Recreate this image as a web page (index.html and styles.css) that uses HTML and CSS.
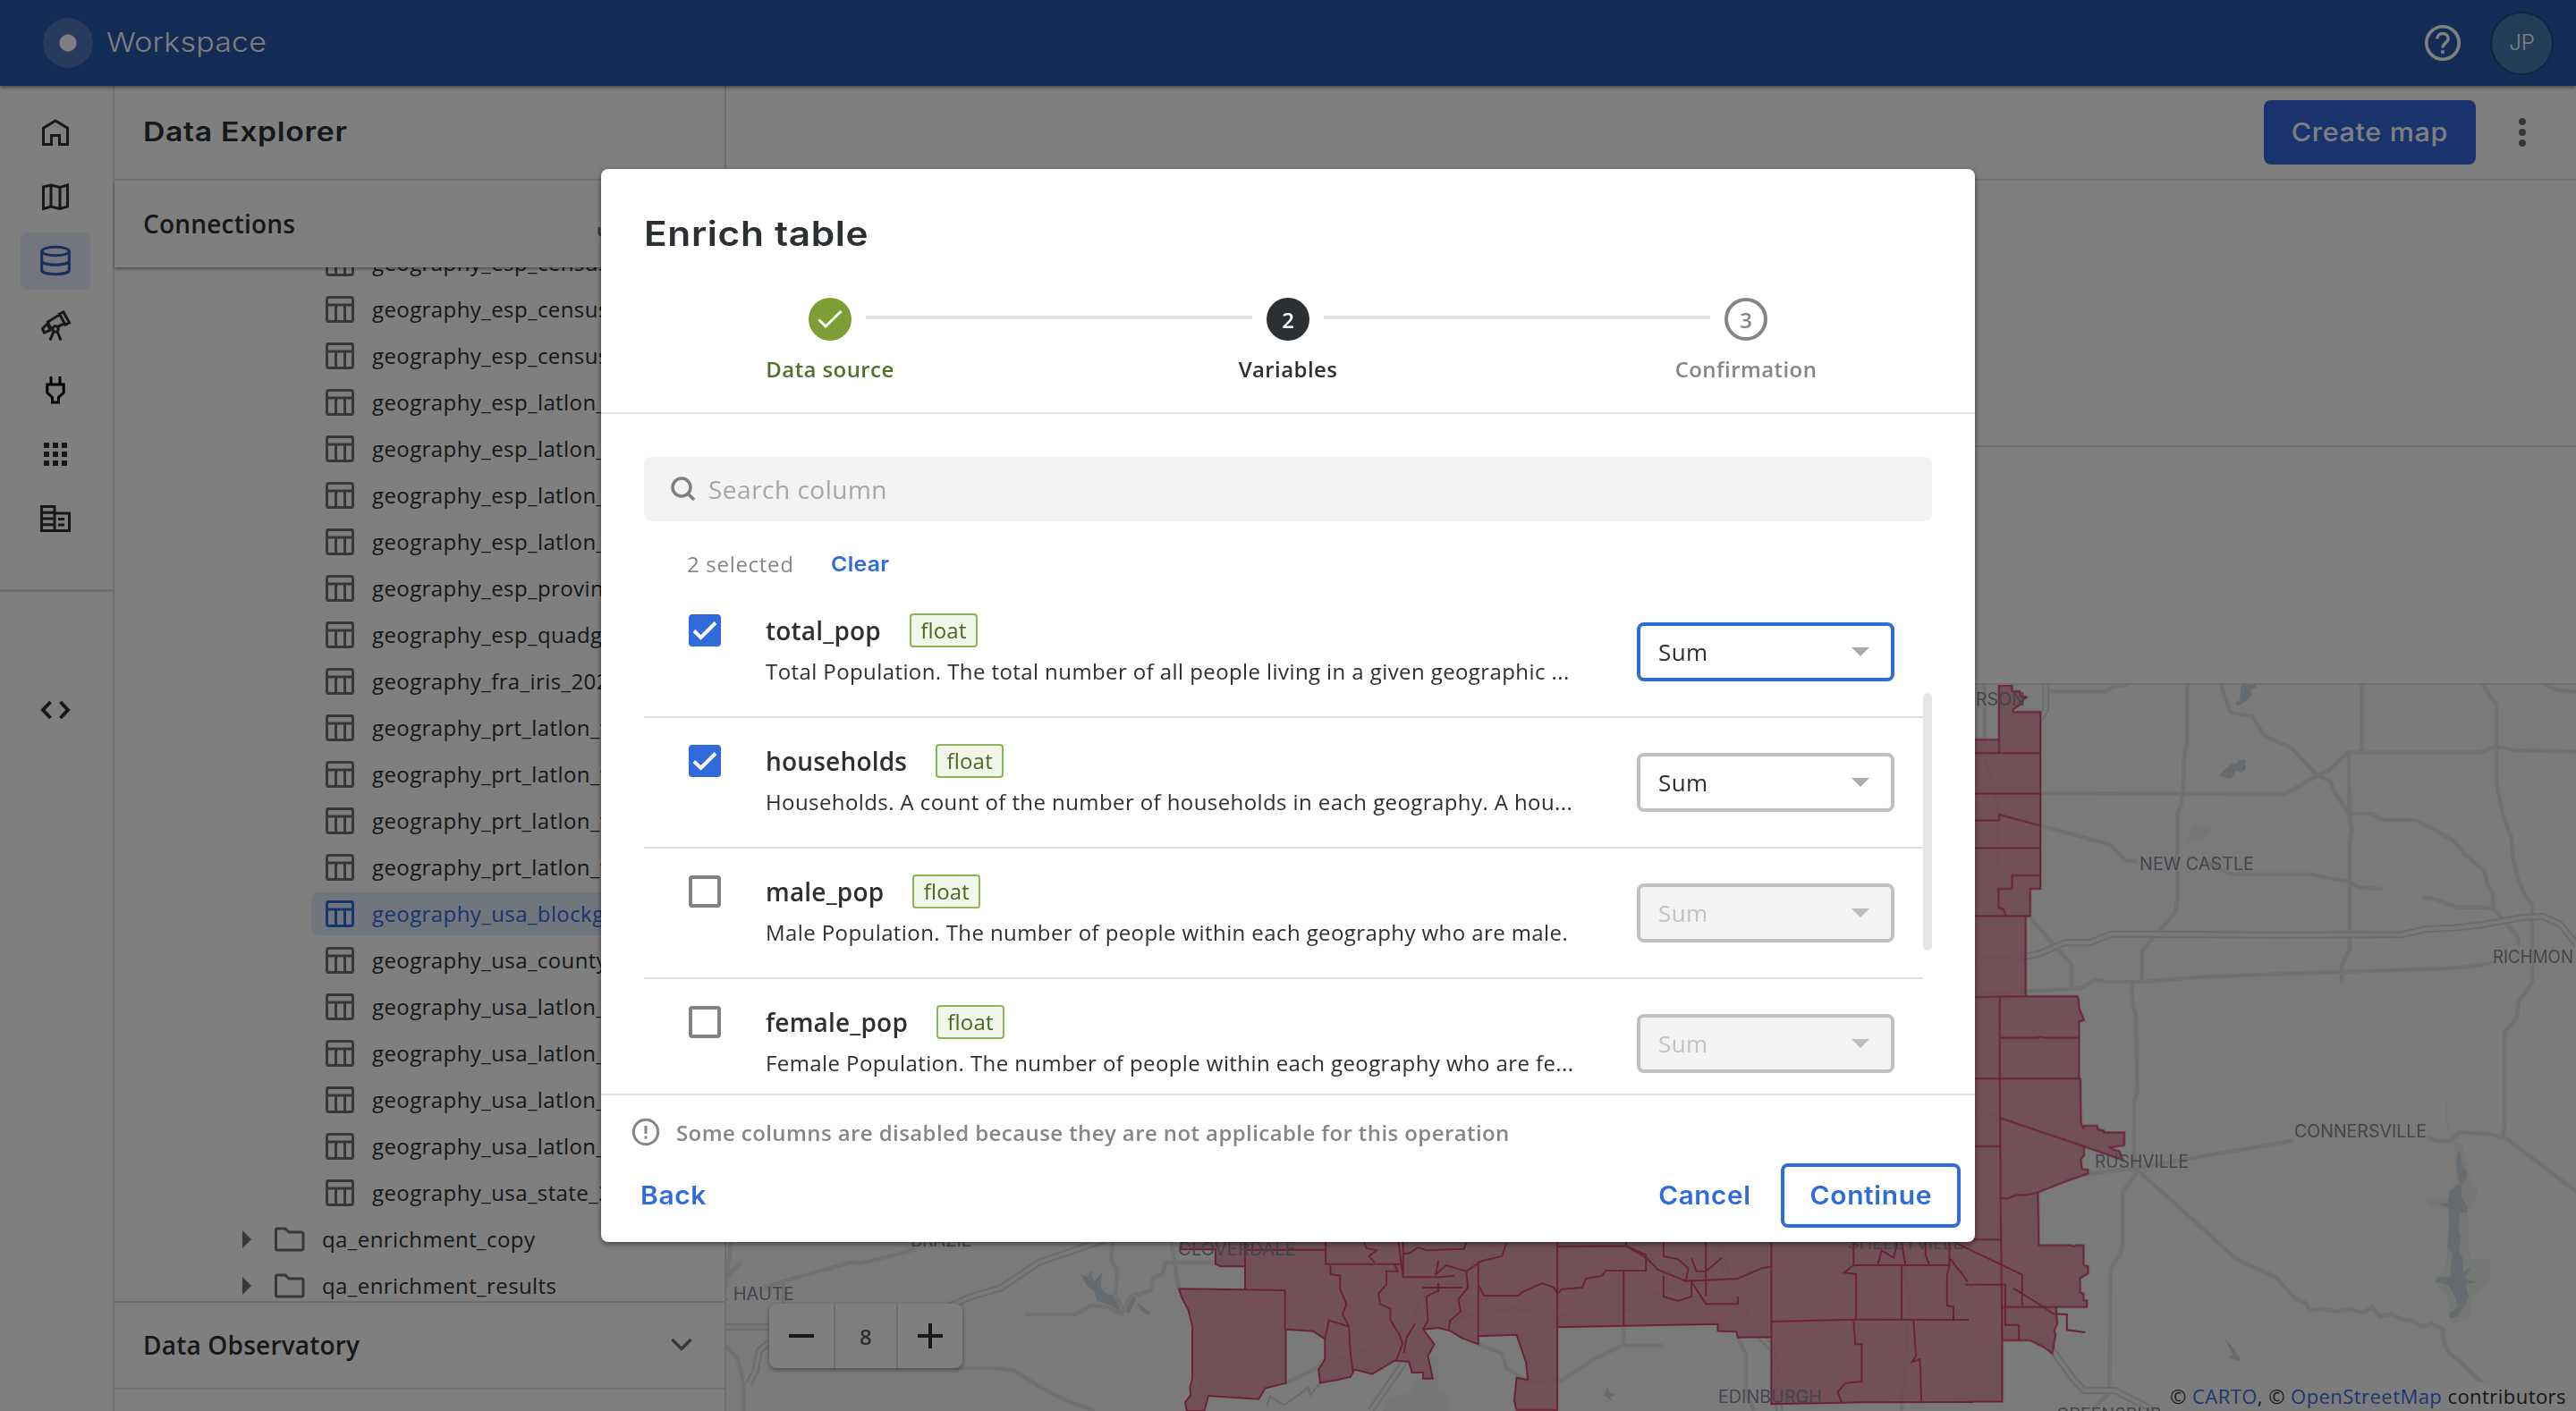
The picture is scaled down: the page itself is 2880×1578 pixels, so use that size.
FILE: index.html
```html
<!DOCTYPE html>
<html lang="en">
<head>
<meta charset="utf-8">
<title>Workspace - Data Explorer</title>
<link rel="stylesheet" href="styles.css">
</head>
<body>
<svg class="defs" width="0" height="0" aria-hidden="true">
  <symbol id="i-table" viewBox="0 0 32 30"><path d="M4 1.5H28Q30.5 1.5 30.5 4V26Q30.5 28.5 28 28.5H4Q1.5 28.5 1.5 26V4Q1.5 1.5 4 1.5ZM2 10H30M11.5 10V28M21.5 10V28" fill="none" stroke="currentColor" stroke-width="3"/></symbol>
  <symbol id="i-folder" viewBox="0 0 36 30"><path d="M4 3H13L17 7H31Q33 7 33 9V25Q33 27 31 27H4Q2.5 27 2.5 25V5Q2.5 3 4 3Z" fill="none" stroke="currentColor" stroke-width="3"/></symbol>
  <symbol id="i-caret" viewBox="0 0 10 20"><path d="M0 0L10 10L0 20Z" fill="currentColor"/></symbol>
  <symbol id="i-drop" viewBox="0 0 20 10"><path d="M0 0H20L10 10Z" fill="currentColor"/></symbol>
  <symbol id="i-check" viewBox="0 0 28 22"><path d="M2 11.5L9.5 19L26 2.5" fill="none" stroke="currentColor" stroke-width="4"/></symbol>
</svg>

<div class="app">
  <header class="topbar">
    <span class="logo"></span>
    <span class="brand">Workspace</span>
    <svg class="help" viewBox="0 0 44 44"><circle cx="22" cy="22" r="18.2" fill="none" stroke="currentColor" stroke-width="3.6"/><path d="M15.8 17.5C15.8 9.500 28.200 9.500 28.200 17.500C28.200 21.500 22 22.300 22 27.500" fill="none" stroke="currentColor" stroke-width="3.600"/><path d="M20.200 30.200H23.800V33.800H20.200Z" fill="currentColor"/></svg>
    <span class="avatar">JP</span>
  </header>

  <div class="body">
    <nav class="rail">
      <div class="rail-top">
        <span class="rail-item"><svg viewBox="0 0 36 36"><path d="M4.500 31.500V13.200L18 5L31.500 13.200V31.500H22.500V21.500H13.500V31.500Z"/></svg></span>
        <span class="rail-item"><svg viewBox="0 0 36 36"><path d="M4.500 7L13 5L23 7.500L31.500 5V29L23 31.500L13 29L4.500 31.500ZM13 5V29M23 7.500V31.500"/></svg></span>
        <span class="rail-item active"><svg viewBox="0 0 36 36"><ellipse cx="18" cy="7" rx="15.300" ry="4.800"/><path d="M2.700 7V28C2.700 34.200 33.300 34.200 33.300 28V7M2.700 17.500C2.700 23.800 33.300 23.800 33.300 17.500"/></svg></span>
        <span class="rail-item"><svg viewBox="0 0 36 36"><path d="M22.500 5L27 3L33.500 14.800L29 17.200ZM22.500 6L9.500 14L12.500 21L15 20.500M21 19L28 16M9 16L3.500 21.500L5.500 26L12 23.300L9.500 17Z"/><circle cx="18" cy="22" r="3.200"/><path d="M15.800 25L12 34.500M20.200 25L24 34.500"/></svg></span>
        <span class="rail-item plug"><svg viewBox="0 0 36 36"><path d="M13 3V12M23 3V12M8.800 12H27.200V21L21.500 26.500V32H14.500V26.500L8.800 21Z"/></svg></span>
        <span class="rail-item"><svg class="solid" viewBox="0 0 36 36"><path d="M5 5h6v6h-6zM15 5h6v6h-6zM25 5h6v6h-6zM5 15h6v6h-6zM15 15h6v6h-6zM25 15h6v6h-6zM5 25h6v6h-6zM15 25h6v6h-6zM25 25h6v6h-6z"/></svg></span>
        <span class="rail-item"><svg viewBox="0 0 36 36"><path d="M2.500 4.500H17V31.500H2.500ZM17 12H33.500V31.500H17M2.500 11.300H17M2.500 18H17M2.500 24.800H17M21 18.500H28M21 25H28"/></svg></span>
      </div>
      <span class="rail-item code"><svg viewBox="0 0 36 36"><path d="M12.500 9L4 18L12.500 27M23.500 9L32 18L23.500 27"/></svg></span>
    </nav>

    <aside class="sidebar">
      <h1 class="side-title"><span>Data Explorer</span></h1>
      <div class="side-section"><span>Connections</span><svg class="import" viewBox="0 0 36 36"><path d="M4 22V28Q4 31 7 31H29Q32 31 32 28V22M18 4V22M10 14L18 22L26 14"/></svg></div>
      <ul class="tree">
        <li class="leaf"><svg><use href="#i-table"/></svg><span>geography_esp_census_2011</span></li>
        <li class="leaf"><svg><use href="#i-table"/></svg><span>geography_esp_census_2019</span></li>
        <li class="leaf"><svg><use href="#i-table"/></svg><span>geography_esp_census_2020</span></li>
        <li class="leaf"><svg><use href="#i-table"/></svg><span>geography_esp_latlon_v1</span></li>
        <li class="leaf"><svg><use href="#i-table"/></svg><span>geography_esp_latlon_v2</span></li>
        <li class="leaf"><svg><use href="#i-table"/></svg><span>geography_esp_latlon_v3</span></li>
        <li class="leaf"><svg><use href="#i-table"/></svg><span>geography_esp_latlon_v4</span></li>
        <li class="leaf"><svg><use href="#i-table"/></svg><span>geography_esp_province</span></li>
        <li class="leaf"><svg><use href="#i-table"/></svg><span>geography_esp_quadgrid</span></li>
        <li class="leaf"><svg><use href="#i-table"/></svg><span>geography_fra_iris_2020</span></li>
        <li class="leaf"><svg><use href="#i-table"/></svg><span>geography_prt_latlon_v1</span></li>
        <li class="leaf"><svg><use href="#i-table"/></svg><span>geography_prt_latlon_v2</span></li>
        <li class="leaf"><svg><use href="#i-table"/></svg><span>geography_prt_latlon_v3</span></li>
        <li class="leaf"><svg><use href="#i-table"/></svg><span>geography_prt_latlon_v4</span></li>
        <li class="leaf selected"><svg><use href="#i-table"/></svg><span>geography_usa_blockgroup</span></li>
        <li class="leaf"><svg><use href="#i-table"/></svg><span>geography_usa_county</span></li>
        <li class="leaf"><svg><use href="#i-table"/></svg><span>geography_usa_latlon_v1</span></li>
        <li class="leaf"><svg><use href="#i-table"/></svg><span>geography_usa_latlon_v2</span></li>
        <li class="leaf"><svg><use href="#i-table"/></svg><span>geography_usa_latlon_v3</span></li>
        <li class="leaf"><svg><use href="#i-table"/></svg><span>geography_usa_latlon_v4</span></li>
        <li class="leaf"><svg><use href="#i-table"/></svg><span>geography_usa_state_2019</span></li>
        <li class="folder"><svg class="caret"><use href="#i-caret"/></svg><svg class="dir"><use href="#i-folder"/></svg><span>qa_enrichment_copy</span></li>
        <li class="folder"><svg class="caret"><use href="#i-caret"/></svg><svg class="dir"><use href="#i-folder"/></svg><span>qa_enrichment_results</span></li>
      </ul>
      <div class="side-section observatory"><span>Data Observatory</span><svg class="chevron" viewBox="0 0 24 16"><path d="M1.500 2L12 12.500L22.500 2"/></svg></div>
      <div class="side-end"></div>
    </aside>

    <main class="main">
      <div class="toolbar">
        <span class="create"><span>Create map</span></span>
        <span class="kebab"><i></i><i></i><i></i></span>
      </div>
      <div class="summary"></div>
      <div class="tabs"></div>
      <div class="map">
        <svg class="canvas" viewBox="812 766 2068 812">
          <!-- east of the modal -->
          <g transform="translate(2160 740) scale(.4592 .5345)">
            <g class="green"><path d="M615 382L634 344L672 344L680 356L660 374L634 370ZM1250 925L1256 925L1256 965L1270 1000L1290 1010L1310 1080L1330 1110L1322 1125L1304 1150L1310 1250L1350 1246L1362 1260L1358 1300L1315 1325L1310 1375L1262 1385L1255 1330L1222 1300L1250 1270L1262 1150L1206 1138L1206 1126L1255 1120L1276 1080L1272 1010L1252 975Z"/></g>
            <g class="water"><path d="M752 48H790V54L776 58L778 70L764 84L744 92L738 88L750 78ZM698 238L728 214L744 212L748 206L764 205V225L752 234L742 228L728 246ZM1282 1022L1290 1052L1303 1068L1300 1082L1290 1092L1288 1120L1303 1138V1150L1284 1154L1282 1190L1288 1205L1283 1230L1293 1250V1276L1312 1268L1298 1292L1330 1298L1298 1302L1307 1328L1300 1345L1280 1370L1260 1374L1262 1362L1280 1350L1274 1330L1258 1306L1226 1298L1228 1288L1262 1288L1262 1270L1268 1240L1254 1226L1260 1180L1258 1142L1235 1135L1256 1132L1262 1106L1284 1092L1276 1050ZM712 1416L738 1440L742 1450L750 1454L748 1464L722 1456L732 1450Z"/></g>
            <g class="road">
              <path d="M283 62H425L440 52L476 48M621 48V165L613 205V250L606 300L597 320V500L592 525L511 605V668M703 48L726 106L780 115L810 155L876 181L938 238L970 250L980 275L1016 318L1070 318L1098 331H1175L1220 350L1270 375L1300 405L1345 438L1352 465L1366 485V515L1428 578V596M264 275L860 277L935 240L965 228L1012 190H1335L1374 177L1415 185L1570 188M1046 48V190M1014 190L1016 318L1022 350L1017 378V600L998 635V672M1340 48L1374 90V255L1392 325L1411 370L1413 400C1425 470 1445 490 1461 508V672L1428 712L1424 745L1394 775V965L1390 995M1490 48L1520 58L1570 64M264 343L435 383L472 417H500M660 417L730 445H920L1015 460L1040 473L1098 475M1194 493L1222 496L1277 514H1345L1368 518M195 495L340 634V682M90 695L228 690L360 684L398 666L430 670H511L650 660L890 652L1240 642L1290 640L1370 630M486 670L488 715L496 738L500 900L492 920V1060L495 1075L464 1108V1215L458 1243L440 1260L434 1275L432 1530L395 1560M380 1072L492 1060L880 1002M1205 995L1230 1003H1260L1285 985L1355 988L1400 998L1570 1110M495 1060L600 1140L740 1250L838 1288L885 1334L908 1340L920 1358L950 1354L985 1360L1015 1354L1050 1362L1072 1350L1090 1370L1118 1365L1150 1378L1168 1378L1195 1392L1215 1384L1245 1397V1420L1258 1447L1280 1460L1340 1510M128 48V200L160 300V430M90 935L167 955M90 1150L167 1123"/>
            </g>
            <path class="hwy" d="M277 48V100L230 165L210 178L90 185M90 625H180L262 611L322 588H384L436 570H500L830 572L1145 571L1200 560L1270 557L1335 551L1440 535L1487 533L1530 550L1570 592M40 1260L170 1350L245 1385L345 1502L370 1525H445L560 1575"/>
            <path class="hwy-in" d="M277 48V100L230 165L210 178L90 185M90 625H180L262 611L322 588H384L436 570H500L830 572L1145 571L1200 560L1270 557L1335 551L1440 535L1487 533L1530 550L1570 592M40 1260L170 1350L245 1385L345 1502L370 1525H445L560 1575"/>
          </g>
          <!-- south of the modal -->
          <g transform="translate(800 1370) scale(.8929 .3333)">
            <path class="green" d="M835 624L840 580L872 560L876 510L890 520L895 440L905 440V560L918 570V624Z"/>
            <path class="water" d="M457 165L465 175L470 152L474 190L484 160L482 210L490 230L500 235L503 265L508 290L490 265L478 255L474 220L465 205ZM508 290L515 250L524 230L528 262L543 290V305L532 285L526 250L518 296ZM1105 565L1112 575L1117 542L1119 560L1128 570L1120 575L1122 590L1113 572Z"/>
            <path class="brook" d="M690 610L694 575L712 604L730 570L742 545L745 570L760 520L775 515"/>
            <path class="road" d="M20 50L12 210M32 125L12 180M60 210L90 185L170 125L183 128L225 100L250 82M85 190V264M0 255H12M388 300H450L470 270L490 275L508 300L520 240L545 220L548 175L560 165L563 126H705M498 50L495 115L503 150L500 240L514 290M570 50L580 215M0 370L28 450L35 530V624M300 480H350L375 490L410 550L440 590L475 624M0 548H12M714 530L760 470L840 400L870 330L885 240L940 150L980 50M955 400L985 430L990 480L1020 525L1060 520L1100 450L1135 405H1187M1137 405V345M880 330L960 300L1000 280L1050 300L1140 290L1180 230L1240 160M1280 380L1290 430V560L1300 624M1480 50L1495 250L1490 450L1485 624M597 480L617 573"/>
            <path class="hwy" d="M487 50L405 125L357 212L320 240L290 275M0 342H67M67 395L55 420L50 490L42 530M870 430L820 624M1255 50L1270 210L1300 350L1325 420L1332 624"/>
            <path class="hwy-in" d="M487 50L405 125L357 212L320 240L290 275M0 342H67M67 395L55 420L50 490L42 530M870 430L820 624M1255 50L1270 210L1300 350L1325 420L1332 624"/>
          </g>
          <g class="blocks">
            <path transform="translate(2160 740) scale(.4592 .5345)" d="M90 163H163V50H195V62H214L216 72L230 74L216 84L214 90L197 100V105H264V475H239V532H228V700H353L357 706L358 725L370 750L358 753V870L361 872L363 968L369 975L371 971H402L404 979L418 981V985H468V1012L434 1016L442 1021L456 1024L464 1042L370 1014V1033L362 1042L364 1053L365 1062L380 1063V1071L330 1086L258 1110L260 1221H340L345 1224L350 1221H369V1262L380 1265V1280L360 1290L361 1320L369 1322V1336H377V1350H302L305 1385L297 1400L301 1407L293 1447L270 1433L240 1420H171V1548H90Z"/>
            <path transform="translate(800 1370) scale(.8929 .3333)" d="M583 50V82H626V130L632 139H663V219L580 214L584 245L592 285L597 340V515L594 545L595 570L588 595L590 624H612L617 573L680 584L688 548L714 530V350L748 356L763 382V450L755 485L757 530L778 520L795 510L800 485L822 500L835 480L850 455L868 458L872 495H886V515H898L892 440L900 400L886 350L905 345L920 355L935 380L955 400V373L1003 368L1015 462L1017 520L1003 512L1000 590L1003 620H1054V343L1255 332V356L1278 358L1280 377L1322 376V601L1440 595L1575 594V50Z"/>
          </g>
          <g class="blocklines" transform="translate(2160 740) scale(.4592 .5345)">
            <path d="M163 163V50H195V62H214L216 72L230 74L216 84L214 90L197 100V105H264V475H239V532H228V700H353L357 706L358 725L370 750L358 753V870L361 872L363 968L369 975L371 971H402L404 979L418 981V985H468V1012L434 1016L442 1021L456 1024L464 1042L370 1014V1033L362 1042L364 1053L365 1062L380 1063V1071L330 1086L258 1110L260 1221H340L345 1224L350 1221H369V1262L380 1265V1280L360 1290L361 1320L369 1322V1336H377V1350H302L305 1385L297 1400L301 1407L293 1447L270 1433L240 1420H171V1548H90M90 163H163V191M90 191H264M90 276H264M90 332H163V320L264 343M90 390H264M264 447H195V475H162V515L174 518L180 532M90 532H228M90 702L228 700M165 702V870L167 1123L171 1420M167 787H255L265 785L275 787H358M90 872H361M167 955L370 1014M90 1014H165M258 1110L230 1116H205L185 1123H167M90 1209H168M171 1350H302"/>
          </g>
          <g class="blocklines" transform="translate(800 1370) scale(.8929 .3333)">
            <path d="M583 57V82H626V130L632 139H663V219M580 214L713 219V350M580 214L584 245L592 285L597 340V515L594 545L595 570L588 595L590 624H612L617 573L680 584L688 548L714 530V350L748 356L763 382V450L755 485L757 530L778 520L795 510L800 485L822 500L835 480L850 455L868 458L872 495H886V515H898L892 440L900 400L886 350L905 345L920 355L935 380L955 400V373L1003 368L1015 462L1017 520L1003 512L1000 590L1003 620H1054V343L1255 332V356L1278 358L1280 377L1322 376V601L1440 595L1575 594"/>
            <path d="M663 57V139M663 83H764M764 57V131H861V57M812 57L815 78L828 85L818 105L825 125M861 95H868L880 75L890 85L937 80L940 60M770 131V165L782 170V215L790 265L785 300L793 340L795 430L798 490M763 382L768 320L792 340M850 131L854 155L840 155V200L830 230L832 265L845 280V320L857 370L860 400L852 455M861 131V175H905L925 170M861 175L855 57M905 120L902 165L915 135L940 155L960 120L985 105L990 60M940 155L942 210L930 250L933 290L920 320L918 350M885 210H935M905 195V225M905 220L890 240L892 320L886 350M876 330L865 380L862 430M955 120V373M955 200L962 237H1005L1010 225L1035 195L1050 210L1054 230M1054 57V343M1054 73L1140 70M1054 230L1060 215L1085 210L1090 180L1110 170L1115 153H1165V100L1140 70V57M1137 153V340M1140 70L1165 110L1180 150L1215 188L1280 180L1310 145L1322 140M1187 57V105L1205 115L1218 145L1215 188M1187 170V240L1205 255L1222 240V190L1240 265H1280V240M1240 57V240M1222 110L1228 155L1240 155L1260 110M1322 57V376M1322 324L1425 317L1569 318M1425 57V135H1545V57M1425 135L1413 160L1428 165V317M1425 317L1427 400H1435V525L1415 530L1405 560L1410 595M1485 135V317M1485 57L1490 135M1500 318L1503 440L1498 460L1508 450L1510 594M1515 57V100L1520 135M1455 135L1460 85L1475 110L1480 60M1545 135L1542 170V270L1550 275V317M1545 110L1568 190"/>
            <path d="M1545 50L1636 167L1636 270M1565 200H1615V335H1632V386M1625 212L1660 270L1675 298L1692 300V352L1715 360"/>
          </g>
          <g class="labels">
            <text x="2209" y="789" textLength="55" lengthAdjust="spacingAndGlyphs">RSON</text>
            <text x="2392" y="973" textLength="128" lengthAdjust="spacingAndGlyphs">NEW CASTLE</text>
            <text x="2787" y="1077" textLength="90" lengthAdjust="spacingAndGlyphs">RICHMON</text>
            <text x="2565" y="1272" textLength="148" lengthAdjust="spacingAndGlyphs">CONNERSVILLE</text>
            <text x="2342" y="1306" textLength="105" lengthAdjust="spacingAndGlyphs">RUSHVILLE</text>
            <text x="2299" y="1589" textLength="132" lengthAdjust="spacingAndGlyphs">GREENSBURG</text>
            <text x="1921" y="1569" textLength="116" lengthAdjust="spacingAndGlyphs">EDINBURGH</text>
            <text x="1317" y="1404" textLength="132" lengthAdjust="spacingAndGlyphs">CLOVERDALE</text>
            <text x="2066" y="1397" textLength="129" lengthAdjust="spacingAndGlyphs">SHELBYVILLE</text>
            <text x="1018" y="1394" textLength="68" lengthAdjust="spacingAndGlyphs">BRAZIL</text>
            <text x="802" y="1454" textLength="86" lengthAdjust="spacingAndGlyphs">E HAUTE</text>
          </g>
        </svg>
        <div class="zoom"><span><svg viewBox="0 0 28 28"><path d="M0 14H28"/></svg></span><span class="level">8</span><span><svg viewBox="0 0 28 28"><path d="M0 14H28M14 0V28"/></svg></span></div>
        <div class="credits">© <b>CARTO</b>, © <b>OpenStreetMap</b> contributors</div>
      </div>
    </main>
  </div>
</div>

<div class="backdrop">
  <section class="modal">
    <div class="modal-head">
      <h2><span>Enrich table</span></h2>
      <div class="steps">
        <div class="step done"><span class="dot"><svg viewBox="0 0 28 22"><path d="M1.500 11.500L9 19L26.500 2" fill="none" stroke="#fff" stroke-width="3"/></svg></span><span>Data source</span></div>
        <span class="line"></span>
        <div class="step current"><span class="dot">2</span><span>Variables</span></div>
        <span class="line"></span>
        <div class="step"><span class="dot">3</span><span>Confirmation</span></div>
      </div>
    </div>
    <div class="modal-body">
      <div class="search"><svg viewBox="0 0 28 28"><circle cx="12" cy="12" r="10"/><path d="M19 19L26 26"/></svg><span>Search column</span></div>
      <div class="selection"><span>2 selected</span><span class="clear">Clear</span></div>
      <div class="list">
        <div class="rows">
          <div class="row"><span class="box on"><svg><use href="#i-check"/></svg></span><div class="info"><div class="name"><span>total_pop</span><span class="tag">float</span></div><p>Total Population. The total number of all people living in a given geographic ...</p></div><div class="select focus"><span>Sum</span><svg><use href="#i-drop"/></svg></div></div>
          <div class="row"><span class="box on"><svg><use href="#i-check"/></svg></span><div class="info"><div class="name"><span>households</span><span class="tag">float</span></div><p>Households. A count of the number of households in each geography. A hou...</p></div><div class="select"><span>Sum</span><svg><use href="#i-drop"/></svg></div></div>
          <div class="row"><span class="box"></span><div class="info"><div class="name"><span>male_pop</span><span class="tag">float</span></div><p>Male Population. The number of people within each geography who are male.</p></div><div class="select off"><span>Sum</span><svg><use href="#i-drop"/></svg></div></div>
          <div class="row"><span class="box"></span><div class="info"><div class="name"><span>female_pop</span><span class="tag">float</span></div><p>Female Population. The number of people within each geography who are fe...</p></div><div class="select off"><span>Sum</span><svg><use href="#i-drop"/></svg></div></div>
        </div>
        <div class="track"><div class="thumb"></div></div>
      </div>
    </div>
    <div class="modal-foot">
      <div class="note"><svg viewBox="0 0 32 32"><circle cx="16" cy="16" r="13.700"/><path d="M16 9V18M16 20.500V23.500"/></svg><span>Some columns are disabled because they are not applicable for this operation</span></div>
      <div class="actions"><span class="back">Back</span><span class="cancel">Cancel</span><span class="continue"><span>Continue</span></span></div>
    </div>
  </section>
</div>
</body>
</html>
```
FILE: styles.css
```css
* { box-sizing: border-box; }
html, body { margin: 0; height: 100%; overflow: hidden; }
body {
  font-family: "Open Sans", sans-serif;
  font-size: 24px;
  letter-spacing: .41px;
  color: #2c3032;
  background: #fff;
}
h1, h2, p, ul { margin: 0; padding: 0; list-style: none; }
.defs { position: absolute; }
svg { display: block; flex: none; }

.app { width: 2880px; height: 1578px; display: flex; flex-direction: column; }

/* top bar */
.topbar {
  height: 96px; flex: none; display: flex; align-items: center;
  padding: 0 25px 0 48px; background: #2656aa; color: #fff;
  box-shadow: 0 2px 4px rgba(0,0,0,.45); z-index: 2;
}
.logo {
  width: 56px; height: 56px; border-radius: 50%;
  background: radial-gradient(circle, #fff 9px, #5176bc 10px);
}
.brand { margin: 0 auto 2px 15px; font: 300 30px/1 Inter, sans-serif; letter-spacing: .2px; transform: scaleX(1.13); transform-origin: left; }
.help { width: 44px; height: 44px; }
.avatar {
  width: 71px; height: 71px; margin-left: 31px; border-radius: 50%;
  display: flex; align-items: center; justify-content: center;
  background: #467ab2; border: 2px solid #22467e;
  font: 300 24px/1 Inter, sans-serif; letter-spacing: 0;
}

.body { flex: 1; min-height: 0; display: flex; }

/* icon rail */
.rail { width: 128px; flex: none; border-right: 2px solid #dedede; }
.rail-top {
  height: 566px; padding: 20px 24px 0 23px; display: flex; flex-direction: column; gap: 8px;
  border-bottom: 3px solid #dedede;
}
.rail-item { width: 78px; height: 64px; border-radius: 8px; display: flex; align-items: center; justify-content: center; }
.rail-item svg { width: 36px; height: 36px; fill: none; stroke: currentColor; stroke-width: 3; }
.rail-item svg.solid { fill: currentColor; stroke: none; }
.rail-item.active { background: #e6edf9; color: #2c5cc0; }
.rail-item.plug { color: #000; }
.rail-item.code { margin: 100px 0 0 23px; }
.rail-item.code svg { stroke-width: 4; }

/* explorer sidebar */
.sidebar { width: 684px; flex: none; display: flex; flex-direction: column; border-right: 2px solid #dedede; }
.side-title {
  height: 106px; flex: none; padding-left: 32px; border-bottom: 2px solid #dedede;
  font: 600 30px/103px Inter, sans-serif; letter-spacing: .6px;
}
.side-title span { display: inline-block; transform: scaleX(1.125); transform-origin: left; }
.side-section {
  height: 97px; flex: none; display: flex; align-items: center; justify-content: space-between;
  padding: 0 108px 2px 32px; font-size: 28px; font-weight: 600; letter-spacing: .2px; background: #fff;
  box-shadow: 0 2px 3px rgba(0,0,0,.35); z-index: 1;
}
.import { width: 36px; height: 36px; fill: none; stroke: #707375; stroke-width: 3; }
.tree { flex: 1; min-height: 0; margin-top: -29px; display: flex; flex-direction: column; gap: 4px; overflow: hidden; }
.tree li { height: 48px; flex: none; display: flex; align-items: center; line-height: 48px; white-space: nowrap; }
.leaf { margin: 0 14px 0 220px; padding-left: 16px; border-radius: 8px; }
.leaf svg { width: 32px; height: 30px; margin-right: 20px; color: #6b6e70; }
.leaf.selected { background: #e2ebf9; color: #2f6bdb; }
.leaf.selected svg { color: #2f6bdb; }
.folder { padding-left: 143px; }
.caret { width: 10px; height: 20px; color: #6b6e70; }
.dir { width: 36px; height: 30px; margin: 0 18px 0 25px; color: #6b6e70; }
.observatory { height: 99px; padding-right: 36px; border-top: 2px solid #dedede; border-bottom: 2px solid #dedede; box-shadow: none; }
.chevron { width: 24px; height: 16px; fill: none; stroke: #6b6e70; stroke-width: 3.500; }
.side-end { height: 24px; flex: none; }

/* main area */
.main { flex: 1; min-width: 0; display: flex; flex-direction: column; }
.toolbar {
  height: 106px; flex: none; display: flex; align-items: center; justify-content: flex-end;
  padding-right: 56px; border-bottom: 2px solid #dedede;
}
.create {
  width: 237px; height: 72px; border-radius: 8px; background: #3268d8; color: #fff;
  display: flex; align-items: center; justify-content: center;
  font: 500 28px/1 Inter, sans-serif; letter-spacing: .6px;
}
.create span { transform: scaleX(1.09); }
.kebab { margin-left: 48px; display: flex; flex-direction: column; gap: 4px; }
.kebab i { width: 8px; height: 8px; border-radius: 50%; background: #6b6e70; }
.summary { height: 298px; flex: none; border-bottom: 2px solid #dedede; }
.tabs { height: 266px; flex: none; border-bottom: 2px solid #dedede; }
.map { flex: 1; min-height: 0; position: relative; background: #f4f4f4; overflow: hidden; }
.canvas { width: 2068px; height: 812px; }
.canvas path { vector-effect: non-scaling-stroke; }
.road, .road path { fill: none; stroke: #e2e2e2; stroke-width: 4.500; stroke-linejoin: round; }
.hwy { fill: none; stroke: #d8d8d8; stroke-width: 8; stroke-linejoin: round; }
.hwy-in { fill: none; stroke: #f2f2f2; stroke-width: 4; stroke-linejoin: round; }
.water { fill: #cdd6e1; }
.brook { fill: none; stroke: #cdd6e1; stroke-width: 2; }
.green { fill: #ebeeea; }
.blocks { opacity: .85; }
.blocks path { fill: #e191a4; }
.blocklines path { fill: none; stroke: #d2446f; stroke-width: 2; }
.labels text { font: 400 19.500px Inter, sans-serif; fill: #828a98; letter-spacing: 0; }
.zoom {
  position: absolute; left: 48px; top: 692px; width: 216px; height: 72px; border-radius: 8px;
  display: grid; grid-template-columns: repeat(3, 1fr); background: #fff; box-shadow: 0 2px 5px rgba(0,0,0,.4);
}
.zoom span { display: flex; align-items: center; justify-content: center; }
.zoom svg { width: 28px; height: 28px; fill: none; stroke: #2c3032; stroke-width: 4; }
.zoom .level { border: solid #dedede; border-width: 0 2px; color: #5c5f61; font-weight: 600; }
.credits {
  position: absolute; right: 0; bottom: 0; height: 32px; padding: 0 11px; line-height: 31px;
  background: #f8f8f8; font-size: 22px; letter-spacing: .450px; white-space: nowrap;
}
.credits b { font-weight: 400; color: #3a6de0; }

/* dialog */
.backdrop {
  position: fixed; inset: 0; z-index: 10; background: rgba(0,0,0,.5);
  display: flex; align-items: center; justify-content: center;
}
.modal {
  width: 1536px; height: 1200px; display: flex; flex-direction: column;
  background: #fff; border-radius: 8px; overflow: hidden; box-shadow: 0 2px 6px rgba(0,0,0,.5);
}
.modal-head { height: 274px; flex: none; border-bottom: 2px solid #e2e4e4; }
.modal-head h2 { height: 144px; padding-left: 48px; font: 600 38px/145px Inter, sans-serif; letter-spacing: .6px; }
.modal-head h2 span { display: inline-block; transform: scaleX(1.115); transform-origin: left; }
.steps { display: flex; justify-content: center; }
.step { width: 80px; display: flex; flex-direction: column; align-items: center; gap: 15px; font-weight: 600; color: #868686; line-height: 33px; white-space: nowrap; }
.step > span:last-child { margin: 0 -60px; }
.dot {
  width: 48px; height: 48px; border-radius: 50%; border: 4px solid #868686;
  display: flex; align-items: center; justify-content: center; letter-spacing: 0;
}
.step.done { color: #50722a; }
.step.done .dot { border: 0; background: #7c9f35; }
.done svg { width: 28px; height: 22px; }
.step.current { color: #2c3032; }
.step.current .dot { border: 0; background: #2c3032; color: #fff; }
.line { width: 432px; height: 4px; margin-top: 20px; background: #e0e0e0; }

.modal-body { flex: 1; min-height: 0; padding: 48px 48px 0; display: flex; flex-direction: column; }
.search { height: 72px; flex: none; padding-left: 30px; border-radius: 8px; background: #f3f3f3; display: flex; align-items: center; gap: 14px; font-size: 28px; letter-spacing: .5px; color: #a6a6a6; }
.search svg { width: 28px; height: 28px; fill: none; stroke: #808080; stroke-width: 3.500; }
.selection { height: 73px; flex: none; padding: 22px 0 0 48px; display: flex; align-items: center; gap: 41px; color: #868686; font-weight: 500; letter-spacing: .7px; }
.clear { padding-top: 2px; font: 600 23px/1 Inter, sans-serif; letter-spacing: .3px; color: #2f6bdb; transform: scaleX(1.08); transform-origin: left; }
.list { flex: 1; min-height: 0; display: flex; overflow: hidden; }
.rows { width: 1430px; }
.row { height: 146px; padding: 0 32px 0 50px; display: flex; align-items: flex-start; }
.row + .row { box-shadow: 0 -1px #dfdfdf, inset 0 1px #dfdfdf; }
.box { width: 36px; height: 36px; margin-top: 31px; border: 4px solid #808285; border-radius: 4px; display: flex; align-items: center; justify-content: center; }
.box.on { border: 0; background: #2f6bdb; color: #fff; }
.box svg { width: 28px; height: 22px; }
.info { flex: 1; margin: 29px 0 0 50px; }
.name { height: 40px; display: flex; align-items: center; gap: 32px; font-size: 28px; font-weight: 600; letter-spacing: .2px; line-height: 40px; }
.tag { height: 38px; width: 76px; border: 2px solid #8fb355; border-radius: 4px; background: #f2f6ea; color: #4c661f; font-size: 24px; font-weight: 500; line-height: 34px; text-align: center; }
.info p { margin-top: 9px; line-height: 34px; white-space: nowrap; }
.select { width: 288px; height: 66px; margin: 40px 0 0; padding: 0 24px 0 20px; border: 4px solid #c0c0c0; border-radius: 8px; display: flex; align-items: center; justify-content: space-between; font-size: 26px; }
.select svg { width: 20px; height: 10px; color: #a9abac; }
.select.focus { border-color: #2f6bdb; }
.select.off { background: #f3f3f3; color: #c0c2c3; }
.select.off svg { color: #bcbec0; }
.track { width: 10px; padding-top: 119px; }
.thumb { height: 288px; border-radius: 5px; background: #e4e6e6; }

.modal-foot { height: 166px; flex: none; border-top: 2px solid #e0e0e0; }
.note { height: 84px; padding: 0 0 2px 34px; display: flex; align-items: center; gap: 18px; color: #868686; font-weight: 600; }
.note svg { width: 32px; height: 32px; fill: none; stroke: #868686; stroke-width: 3; }
.actions { height: 56px; display: flex; align-items: center; padding: 0 16px 0 44px; font: 600 28px/1 Inter, sans-serif; letter-spacing: .6px; color: #2f6bdb; }
.back { margin-right: auto; transform: scaleX(1.07); transform-origin: left; }
.cancel { transform: scaleX(1.06); transform-origin: right; }
.continue { width: 201px; height: 72px; margin-left: 33px; border: 4px solid #2f6bdb; border-radius: 8px; display: flex; align-items: center; justify-content: center; }
.continue span { transform: scaleX(1.07); }
```
